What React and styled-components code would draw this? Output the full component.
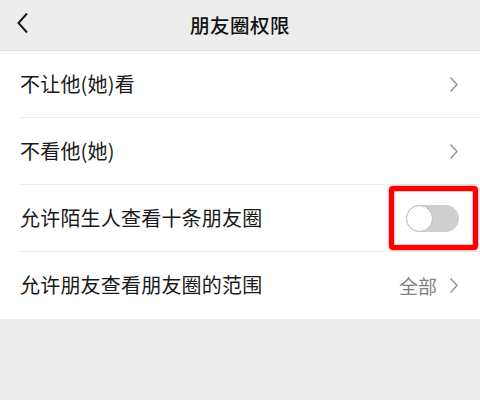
import React from "react";
import styled, { createGlobalStyle } from "styled-components";

const GlobalStyle = createGlobalStyle`
  html, body {
    margin: 0;
    padding: 0;
    background: #ededed;
    font-family: "Noto Sans CJK SC", "Noto Sans", sans-serif;
  }
`;

const rows = [
  { label: "不让他(她)看", kind: "link" },
  { label: "不看他(她)", kind: "link" },
  { label: "允许陌生人查看十条朋友圈", kind: "toggle" },
  { label: "允许朋友查看朋友圈的范围", kind: "link", value: "全部" },
];

const App = () => {
  return (
    <>
      <GlobalStyle />
      <Page>
        <Header>
          <BackButton>
            <svg width="14" height="22" viewBox="0 0 14 22">
              <path d="M11 1.5 L2.5 11 L11 20.5" fill="none" stroke="#1a1a1a" strokeWidth="2" />
            </svg>
          </BackButton>
          <Title>朋友圈权限</Title>
        </Header>
        <List>
          {rows.map((row, i) => (
            <Row key={row.label} last={i === rows.length - 1}>
              <Label>{row.label}</Label>
              {row.kind === "toggle" ? (
                <Highlight>
                  <Switch>
                    <Knob />
                  </Switch>
                </Highlight>
              ) : (
                <Right>
                  {row.value && <Value>{row.value}</Value>}
                  <svg width="10" height="17" viewBox="0 0 10 17">
                    <path d="M1.5 1.5 L8 8.5 L1.5 15.5" fill="none" stroke="#9a9a9a" strokeWidth="1.6" />
                  </svg>
                </Right>
              )}
            </Row>
          ))}
        </List>
      </Page>
    </>
  );
};

export default App;

const Page = styled.div`
  width: 480px;
  height: 400px;
  background: #ededed;
  overflow: hidden;
`;

const Header = styled.div`
  position: relative;
  height: 51px;
  display: flex;
  align-items: center;
  justify-content: center;
  box-sizing: border-box;
  border-bottom: 1px solid #e2e2e2;
`;

const BackButton = styled.div`
  position: absolute;
  left: 16px;
  top: 12px;
  display: flex;
`;

const Title = styled.div`
  font-size: 19.5px;
  font-weight: 500;
  color: #111;
  letter-spacing: 0.5px;
  margin-top: -2px;
`;

const List = styled.div`
  background: #fff;
`;

const Row = styled.div`
  height: 67px;
  margin-left: 20px;
  padding-right: 20px;
  display: flex;
  align-items: center;
  justify-content: space-between;
  box-sizing: border-box;
  border-bottom: 1px solid ${(p) => (p.last ? "transparent" : "#ececec")};
`;

const Label = styled.div`
  font-size: 20px;
  color: #191919;
  margin-top: -1px;
  letter-spacing: 0.2px;
`;

const Right = styled.div`
  display: flex;
  align-items: center;
  gap: 12px;
  margin-right: 1px;
`;

const Value = styled.div`
  font-size: 19px;
  color: #7f7f7f;
`;

const Highlight = styled.div`
  margin-right: -18px;
  width: 89px;
  height: 64px;
  box-sizing: border-box;
  border: 5px solid #ff0000;
  border-radius: 4px;
  box-shadow: 0 0 2px #ff3030, inset 0 0 2px #ff3030;
  display: flex;
  align-items: center;
  justify-content: center;
  padding-right: 3px;
`;

const Switch = styled.div`
  width: 53px;
  height: 27px;
  border-radius: 14px;
  background: #cfcfcf;
  display: flex;
  align-items: center;
`;

const Knob = styled.div`
  width: 25px;
  height: 25px;
  border-radius: 50%;
  background: #fff;
  border: 1px solid #bdbdbd;
`;
